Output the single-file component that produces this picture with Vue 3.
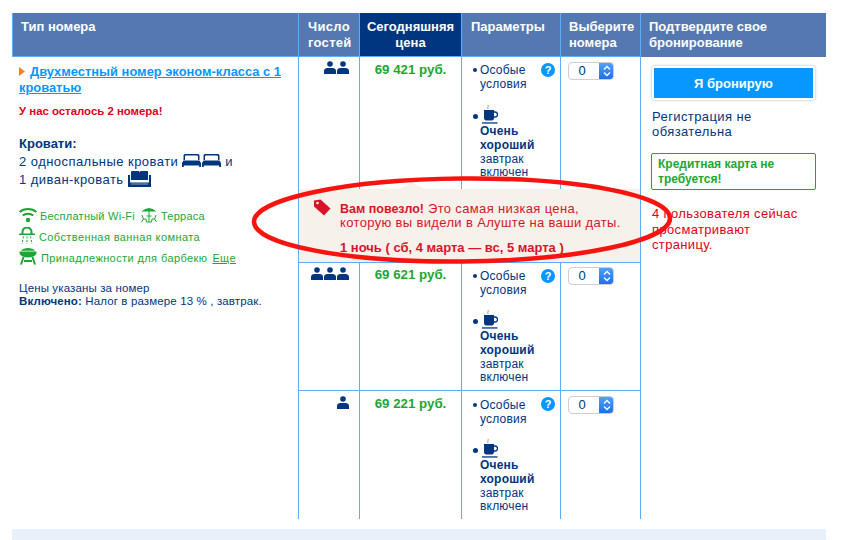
<script setup>
const rows = [
  { id: 'r1', people: 2, price: '69 421 руб.' },
  { id: 'r2', people: 3, price: '69 621 руб.' },
  { id: 'r3', people: 1, price: '69 221 руб.' },
]
const heads = [
  { t: 'Тип номера', c: '' },
  { t: 'Число гостей', c: 'h2' },
  { t: 'Сегодняшняя цена', c: 'h3' },
  { t: 'Параметры', c: 'h4' },
  { t: 'Выберите номера', c: 'h5' },
  { t: 'Подтвердите свое бронирование', c: 'h6' },
]
</script>

<template>
  <div class="page">
    <div class="wrap">
      <div class="head">
        <div v-for="h in heads" :key="h.t" class="hc" :class="h.c">{{ h.t }}</div>
      </div>
      <div class="body">
        <div class="room">
          <div class="title">
            <svg class="tri" width="6" height="9" viewBox="0 0 6 9"><path d="M0 0 L6 4.500 L0 9 Z" fill="#f58220"/></svg>
            <a class="link">Двухместный номер эконом-класса с 1 кроватью</a>
          </div>
          <div class="left-few">У нас осталось 2 номера!</div>
          <div class="beds-title">Кровати:</div>
          <div class="beds">2 односпальные кровати
            <svg class="bed" width="19" height="13" viewBox="0 0 19 13"><path d="M3 0h13a1.500 1.500 0 0 1 1.500 1.500V6h-1.500V2.500a1 1 0 0 0-1-1H4a1 1 0 0 0-1 1V6H1.500V1.500A1.500 1.500 0 0 1 3 0z" fill="#003580"/><path d="M1.500 6.500h16L19 9v4h-1.800v-1.500H1.800V13H0V9z" fill="#003580"/></svg><svg class="bed b2" width="19" height="13" viewBox="0 0 19 13"><path d="M3 0h13a1.500 1.500 0 0 1 1.500 1.500V6h-1.500V2.500a1 1 0 0 0-1-1H4a1 1 0 0 0-1 1V6H1.500V1.500A1.500 1.500 0 0 1 3 0z" fill="#003580"/><path d="M1.500 6.500h16L19 9v4h-1.800v-1.500H1.800V13H0V9z" fill="#003580"/></svg>
            и</div>
          <div class="beds">1 диван-кровать
            <svg class="sofa" width="23" height="16" viewBox="0 0 23 16"><path d="M4 0h6.500a1 1 0 0 1 1 1v8H3V1a1 1 0 0 1 1-1zM12.500 0H19a1 1 0 0 1 1 1v8h-8.500V1.500z" fill="#003580"/><path d="M0 4h2v7.500h19V4h2v12H0z" fill="#003580"/><path d="M3 12.500h17v1H3z" fill="#8fa7cb"/></svg>
          </div>
          <div class="am am1">
            <svg width="18" height="16" viewBox="0 0 18 16"><g fill="none" stroke="#1aa832" stroke-width="2"><path d="M.7 5C5 1 13 1 17.300 5"/><path d="M3.700 8.500C6.500 6 11.500 6 14.300 8.500"/></g><circle cx="9" cy="13" r="2.200" fill="#1aa832"/></svg>
            <span class="am-t">Бесплатный Wi-Fi</span>
            <svg class="terrace" width="18" height="17" viewBox="0 0 18 17"><path d="M1.500 5.500 Q9 -1.500 16.500 5.500Z" fill="#1aa832"/><g fill="none" stroke="#1aa832" stroke-width="1"><path d="M9 5v11M6.500 10h5M2 9l1.500 4-2 3M16 9l-1.500 4 2 3M3.500 13H6l.5 3M14.500 13H12l-.5 3M6.500 16h5"/></g></svg>
            <span class="am-t">Терраса</span>
          </div>
          <div class="am am2">
            <svg width="16" height="17" viewBox="0 0 16 17"><path d="M3.500 7V5a4.500 4.500 0 0 1 9 0v2" fill="none" stroke="#1aa832" stroke-width="2"/><path d="M0 6.500h16V8H0z" fill="#1aa832"/><g stroke="#1aa832" stroke-width="1" stroke-dasharray="2 1.500"><path d="M4.500 9.500 3 17M8 9.500V17M11.500 9.500 13 17"/></g></svg>
            <span class="am-t">Собственная ванная комната</span>
          </div>
          <div class="am am3">
            <svg width="18" height="17" viewBox="0 0 18 17"><path d="M.5 3.500h17v1c0 3-3.500 5-8.500 5s-8.500-2-8.500-5z" fill="#1aa832"/><path d="M2 2.700C3.500.8 6 0 9 0s5.500.8 7 2.700z" fill="#1aa832"/><path d="M4.500 9 2 16.500M13.500 9 16 16.500M5 13h8" fill="none" stroke="#1aa832" stroke-width="2"/></svg>
            <span class="am-t">Принадлежности для барбекю</span>
            <a class="more">Еще</a>
          </div>
          <div class="prices">Цены указаны за номер<br><b>Включено:</b> Налог в размере 13 % , завтрак.</div>
        </div>

        <template v-for="(r, i) in rows" :key="r.id">
          <div class="cell people" :class="'row' + i">
            <svg v-for="n in r.people" :key="n" class="person" width="12" height="13" viewBox="0 0 12 13"><circle cx="6" cy="3" r="2.800" fill="#003580"/><path d="M0 13V10C0 8 1.500 7 3.500 7h5C10.500 7 12 8 12 10V13Z" fill="#003580"/></svg>
          </div>
          <div class="cell price" :class="'row' + i">{{ r.price }}</div>
          <div class="cell params" :class="'row' + i">
            <div class="p-line">
              <span class="dot"></span>
              <span class="p-text">Особые<br>условия</span>
              <span class="help">?</span>
            </div>
            <div class="cup-line">
              <span class="dot"></span>
              <svg class="cup" width="16" height="19" viewBox="0 0 16 19"><path d="M6 0c1 1.500-1 2 0 4" fill="none" stroke="#7f9ac0" stroke-width="1"/><path d="M2 5h10v8c0 1.500-1 2.500-2 2.500H4c-1 0-2-1-2-2.500z" fill="#003580"/><path d="M12 7h1a2 2 0 0 1 0 5h-1" fill="none" stroke="#003580" stroke-width="1.300"/><path d="M0 17.300h15.500v1.300H0z" fill="#003580"/></svg>
            </div>
            <div class="p-meal"><b>Очень хороший</b><br>завтрак включен</div>
          </div>
          <div class="cell sel" :class="'row' + i">
            <div class="select">
              <span class="sel-v">0</span>
              <span class="sel-b">
                <svg width="8" height="12" viewBox="0 0 8 12"><path d="M1 4.500 L4 1.500 L7 4.500M1 7.500 L4 10.500 L7 7.500" fill="none" stroke="#fff" stroke-width="1.300"/></svg>
              </span>
            </div>
          </div>
        </template>

        <div class="confirm">
          <button class="btn">Я бронирую</button>
          <div class="reg">Регистрация не обязательна</div>
          <div class="card">Кредитная карта не требуется!</div>
          <div class="watch">4 пользователя сейчас просматривают страницу.</div>
        </div>
      </div>

      <div class="pop">
        <span class="pop-arrow"></span>
        <svg class="tag" width="18" height="17" viewBox="0 0 18 17"><path d="M1 1.500 L7.500 0.500 L17.500 9.500 L11 16.500 L1 7.500Z" fill="#d9142a"/><circle cx="4.500" cy="4" r="1.300" fill="#f7f1eb"/></svg>
        <div class="pop-text">
          <div><b>Вам повезло!</b> Это самая низкая цена, которую вы видели в Алуште на ваши даты.</div>
          <div class="pop-date">1 ночь ( сб, 4 марта — вс, 5 марта )</div>
        </div>
      </div>

      <svg class="circle" width="440" height="100" viewBox="0 0 440 100"><ellipse cx="221" cy="50" rx="208" ry="41.500" fill="none" stroke="#f5140f" stroke-width="4.500" transform="rotate(-0.5 221 50)"/></svg>
    </div>
    <div class="band"></div>
  </div>
</template>

<style>
html, body { margin: 0; background: #fff; }
</style>

<style scoped>
.page {
  width: 850px;
  height: 540px;
  overflow: hidden;
  box-sizing: border-box;
  padding: 13px 24px 0 12px;
  font-family: "Liberation Sans", Arial, sans-serif;
  font-size: 13px;
  color: #003580;
  background: #fff;
}
.wrap { position: relative; width: 814px; height: 506px; }
.head {
  display: grid;
  grid-template-columns: 286px 61px 102px 99px 80px 186px;
  height: 44px;
}
.hc {
  box-sizing: border-box;
  background: #5479b2;
  border-left: 1px solid #5aaeff;
  border-bottom: 1px solid #5aaeff;
  color: #fff;
  font-weight: 700;
  font-size: 13px;
  line-height: 16px;
  padding: 6px 6px 0 8px;
}
.h2 { padding-left: 9px; padding-right: 2px; letter-spacing: .3px; }
.h3 { background: #003580; text-align: center; padding: 6px 2px 0; }
.h4 { padding-left: 9px; }
.h5 { padding-left: 8px; padding-right: 2px; }
.h6 { padding-left: 8px; border-bottom: 0; }

.body {
  display: grid;
  grid-template-columns: 286px 61px 102px 99px 80px 186px;
  grid-template-rows: 205px 128px 129px;
  height: 462px;
}
.room { grid-column: 1; grid-row: 1 / 4; padding: 7px 14px 0 7px; }
.title { font-size: 12.900px; line-height: 16px; font-weight: 700; }
.tri { margin-right: 5px; }
.link { color: #0896ff; text-decoration: underline; }
.left-few { color: #e0001a; font-size: 11.400px; font-weight: 700; margin-top: 8px; line-height: 14px; }
.beds-title { font-weight: 700; margin-top: 17px; line-height: 18px; font-size: 13px; }
.beds { line-height: 18px; letter-spacing: .45px; }
.bed { vertical-align: -1px; }
.b2 { margin-left: 1px; }
.sofa { vertical-align: -3px; }
.am {
  display: flex;
  align-items: flex-end;
  gap: 4px;
  color: #1aa832;
  font-size: 11px;
  letter-spacing: .25px;
  height: 21px;
}
.am1 { margin-top: 13px; gap: 3px; }
.am2, .am3 { letter-spacing: .4px; }
.am-t { line-height: 14px; }
.terrace { margin-left: 2px; }
.more { margin-left: 1px; text-decoration: underline; line-height: 14px; }
.prices { margin-top: 17px; font-size: 11.500px; line-height: 13px; letter-spacing: .13px; }

.cell { box-sizing: border-box; border-left: 1px solid #5aaeff; }
.row1, .row2 { border-top: 1px solid #5aaeff; }
.row0 { grid-row: 1; }
.row1 { grid-row: 2; }
.row2 { grid-row: 3; }
.people { grid-column: 2; display: flex; justify-content: flex-end; gap: 1px; padding: 4px 10px 0 0; align-items: flex-start; }
.people.row2 { padding-top: 5px; }
.price { grid-column: 3; text-align: center; color: #1aa832; font-weight: 700; padding-top: 5px; line-height: 15px; font-size: 13.300px; }
.price.row1 { padding-top: 4px; }
.params { grid-column: 4; padding: 6px 0 0 11px; font-size: 12px; line-height: 14px; letter-spacing: .2px; position: relative; }
.params.row2 { padding-top: 7px; }
.p-line { display: flex; align-items: flex-start; }
.dot { width: 4px; height: 4px; border-radius: 50%; background: #003580; margin: 5px 3px 0 0; flex: none; }
.p-text { display: block; }
.help {
  position: absolute;
  left: 79px;
  top: 6px;
  width: 14px;
  height: 14px;
  border-radius: 50%;
  background: #0896ff;
  color: #fff;
  font-size: 11px;
  font-weight: 700;
  line-height: 14px;
  text-align: center;
  letter-spacing: 0;
}
.cup-line { display: flex; align-items: center; margin-top: 12px; height: 21px; }
.row0 .cup-line { margin-top: 13px; }
.cup-line .dot { width: 5px; height: 5px; margin: 4px 4px 0 0; }
.p-meal { padding-left: 7px; line-height: 13.800px; }
.sel { grid-column: 5; padding: 5px 0 0 7px; }
.sel.row1 { padding-top: 4px; }
.select {
  display: flex;
  box-sizing: border-box;
  width: 46px;
  height: 18px;
  border: 1px solid #cfcfcf;
  border-radius: 4px;
  overflow: hidden;
  background: #fff;
}
.sel-v { flex: 1; font-size: 13px; line-height: 16px; text-align: center; padding-right: 4px; }
.sel-b {
  width: 15px;
  margin: -1px -1px -1px 0;
  background: linear-gradient(#56a2fb, #1a6cf0);
  display: flex;
  align-items: center;
  justify-content: center;
}
.confirm {
  grid-column: 6;
  grid-row: 1 / 4;
  border-left: 1px solid #5aaeff;
  padding: 9px 10px 0 10px;
  box-sizing: border-box;
}
.btn {
  display: block;
  box-sizing: border-box;
  width: 163px;
  height: 34px;
  margin-left: 1px;
  border: 2px solid #fff;
  box-shadow: 0 0 3px rgba(0, 0, 0, .3);
  background: #0896ff;
  color: #fff;
  font: 700 13px "Liberation Sans", Arial, sans-serif;
  border-radius: 2px;
  padding: 0;
}
.reg { margin: 9px 0 0 1px; line-height: 15px; letter-spacing: .4px; }
.card {
  margin-top: 14px;
  box-sizing: border-box;
  width: 165px;
  height: 37px;
  border: 1px solid #1aa832;
  border-radius: 2px;
  color: #1aa832;
  font-size: 12px;
  font-weight: 700;
  line-height: 15px;
  padding: 3px 6px;
}
.watch { margin: 16px 0 0 1px; width: 160px; color: #e0001a; line-height: 15.500px; letter-spacing: .35px; }

.pop {
  position: absolute;
  left: 287px;
  top: 176px;
  width: 341px;
  height: 73px;
  background: #f7f1eb;
  color: #d9142a;
  box-sizing: border-box;
  padding: 13px 14px 0 41px;
}
.pop-arrow {
  position: absolute;
  left: 101px;
  top: -7px;
  width: 0;
  height: 0;
  border-left: 12px solid transparent;
  border-right: 12px solid transparent;
  border-bottom: 7px solid #f7f1eb;
}
.tag { position: absolute; left: 14px; top: 10px; }
.pop-text { font-size: 13px; line-height: 13px; letter-spacing: .35px; }
.pop-text b { font-size: 12.500px; letter-spacing: 0; }
.pop-date { font-weight: 700; margin-top: 12px; line-height: 14px; letter-spacing: 0; }
.circle { position: absolute; left: 229px; top: 157px; pointer-events: none; }
.band { width: 814px; height: 20px; margin-top: 10px; background: #e8f0fa; }
</style>
